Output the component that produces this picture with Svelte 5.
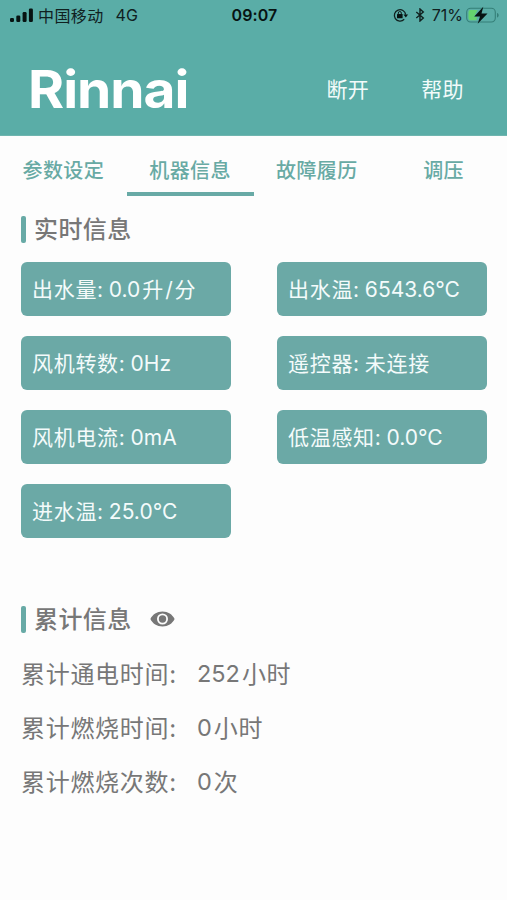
<script>
  // Tabs across the top of the page
  const tabs = [
    { id: 'params', label: '参数设定' },
    { id: 'machine', label: '机器信息' },
    { id: 'faults', label: '故障履历' },
    { id: 'pressure', label: '调压' }
  ];

  // Realtime readings, laid out two per row
  const readings = [
    { label: '出水量', value: '0.0', unit: '升/分' },
    { label: '出水温', value: '6543.6°C' },
    { label: '风机转数', value: '0Hz' },
    { label: '遥控器', value: '', unit: '未连接' },
    { label: '风机电流', value: '0mA' },
    { label: '低温感知', value: '0.0°C' },
    { label: '进水温', value: '25.0°C' }
  ];

  const totals = [
    { label: '累计通电时间', value: '252', unit: '小时' },
    { label: '累计燃烧时间', value: '0', unit: '小时' },
    { label: '累计燃烧次数', value: '0', unit: '次' }
  ];

  let activeTab = $state('machine');
  let showTotals = $state(true);
</script>

<div class="app">
  <header>
    <div class="status-bar">
      <div class="carrier">
        <svg class="signal" width="24" height="15" viewBox="0 0 24 15">
          <rect x="0" y="10" width="4" height="4" rx="1.3" />
          <rect x="6.3" y="7.5" width="4" height="6.5" rx="1.3" />
          <rect x="12.6" y="4" width="4" height="10" rx="1.3" />
          <rect x="18.9" y="0.5" width="4" height="13.5" rx="1.3" />
        </svg>
        <span class="operator">中国移动</span>
        <span class="network">4G</span>
      </div>
      <div class="clock">09:07</div>
      <div class="indicators">
        <svg class="rotation" width="16" height="14" viewBox="0 0 16 14">
          <path d="M11.2 11.3A5.7 5.7 0 1 1 12.7 6.6" fill="none" stroke="#10201f" stroke-width="1.3" />
          <path d="M10.5 6.5h4.6l-2.3 3.1z" />
          <rect x="4" y="6" width="5.6" height="4.3" rx="0.5" />
          <path d="M5.3 6.5V5a1.5 1.5 0 0 1 3 0v1.5" fill="none" stroke="#10201f" stroke-width="1" />
        </svg>
        <svg class="bluetooth" width="10" height="14" viewBox="0 0 10 14">
          <path d="M1.3 4l7 6L5 13V1l3.3 3-7 6" fill="none" stroke="#10201f" stroke-width="1.4" />
        </svg>
        <span class="percent">71%</span>
        <svg class="battery" width="34" height="18" viewBox="0 0 34 18">
          <rect x="0.7" y="2.2" width="28.6" height="13.8" rx="4" fill="none" stroke="#357f78" stroke-width="1.1" />
          <path class="charge" d="M4.5 4H11.500L8 10.800h3.200l-1 3.400H4.500a2 2 0 0 1-2-2V6a2 2 0 0 1 2-2z" />
          <path d="M31 7v4.5c1-.3 1.7-1.1 1.7-2.25S32 7.3 31 7z" fill="#357f78" />
          <path d="M17.300 0.800L8.300 10.400h5.700l-2.300 7.300L21.500 7.600h-6z" />
        </svg>
      </div>
    </div>

    <div class="nav-bar">
      <div class="logo">Rinnai</div>
      <nav>
        <button>断开</button>
        <button>帮助</button>
      </nav>
    </div>
  </header>

  <div class="tabs">
    {#each tabs as tab}
      <button class:active={tab.id === activeTab} onclick={() => (activeTab = tab.id)}>{tab.label}</button>
    {/each}
  </div>

  <main>
    <h2><span>实时信息</span></h2>
    <div class="readings">
      {#each readings as item}
        <div class="reading">
          <span class="cjk">{item.label}:</span>
          {#if item.value}<span class="value">{item.value}</span>{/if}
          {#if item.unit}<span class="cjk unit" class:spaced={item.unit.includes('/')}>{item.unit}</span>{/if}
        </div>
      {/each}
    </div>

    <div class="totals-title">
      <h2><span>累计信息</span></h2>
      <button class="toggle" aria-label="显示" onclick={() => (showTotals = !showTotals)}>
        <svg width="25" height="16" viewBox="0 0 25 16">
          <path
            fill-rule="evenodd"
            d="M12.5 0.5C7 .5 2.6 3.4.4 8c2.2 4.6 6.6 7.5 12.1 7.5S22.4 12.6 24.6 8C22.4 3.4 18 .5 12.5.5zm0 2a5.5 5.5 0 1 1 0 11 5.5 5.5 0 0 1 0-11z"
          />
          <circle cx="12.5" cy="8" r="3.7" />
        </svg>
      </button>
    </div>

    {#if showTotals}
      <div class="totals">
        {#each totals as item}
          <div class="total">
            <span class="cjk name">{item.label}:</span>
            <span class="value">{item.value}</span>
            <span class="cjk">{item.unit}</span>
          </div>
        {/each}
      </div>
    {/if}
  </main>
</div>

<style>
  :global(body) {
    background: #fdfdfd;
  }

  .app {
    width: 507px;
    height: 900px;
    overflow: hidden;
    box-sizing: border-box;
    background: #fdfdfd;
    font-family: Inter, 'Noto Sans CJK SC', sans-serif;
    color: #777;
  }

  button {
    padding: 0;
    border: none;
    background: none;
    font-family: inherit;
    cursor: pointer;
  }

  header {
    height: 136px;
    box-sizing: border-box;
    background: #5aada7;
    border-bottom: 1px solid #6fb5af;
  }

  .status-bar {
    display: grid;
    grid-template-columns: 1fr auto 1fr;
    align-items: center;
    height: 30px;
    padding: 0 7px 0 10px;
    color: #10201f;
    font-size: 16px;
  }

  .status-bar svg {
    fill: #071312;
  }

  .carrier,
  .indicators {
    display: flex;
    align-items: center;
  }

  .indicators {
    justify-content: flex-end;
  }

  .operator {
    margin-left: 4px;
    padding-bottom: 1px;
    font-size: 16px;
    letter-spacing: 0.4px;
  }

  .network {
    margin-left: 12px;
  }

  .clock {
    margin-right: 1px;
    color: #071312;
    font-weight: 600;
    letter-spacing: 0.1px;
  }

  .bluetooth {
    margin-left: 6px;
  }

  .percent {
    margin: 0 3px 0 7px;
  }

  .status-bar .charge {
    fill: #65d36e;
  }

  .nav-bar {
    display: flex;
    align-items: center;
    justify-content: space-between;
    height: 105px;
    padding: 0 43px 0 28px;
    box-sizing: border-box;
  }

  .logo {
    margin-top: 15px;
    color: #fff;
    font-size: 52px;
    font-weight: 700;
    line-height: 60px;
    letter-spacing: -1px;
    transform: scaleX(1.06);
    transform-origin: left center;
  }

  nav {
    display: flex;
    gap: 52px;
    margin-top: 14px;
  }

  nav button {
    color: #f2fbfa;
    font-size: 21px;
    line-height: 30px;
    letter-spacing: 0.4px;
  }

  .tabs {
    display: grid;
    grid-template-columns: repeat(4, 1fr);
    height: 60px;
  }

  .tabs button {
    padding-top: 10px;
    border-bottom: 4px solid transparent;
    color: #68aaa4;
    font-size: 20px;
    font-weight: 500;
    letter-spacing: 0.4px;
  }

  .tabs button.active {
    border-bottom-color: #68aaa6;
  }

  main {
    padding: 16px 20px 0 21px;
  }

  h2 {
    display: flex;
    align-items: center;
    gap: 8px;
    height: 34px;
    margin: 0;
    font-size: 24px;
    font-weight: 500;
    letter-spacing: 0.4px;
  }

  h2 span {
    padding-bottom: 3px;
  }

  h2::before {
    content: '';
    width: 5px;
    height: 27px;
    border-radius: 2px;
    background: #68aaa6;
  }

  /* the CJK face sits lower in its line box than the Latin one */
  .cjk {
    padding-bottom: 2px;
  }

  .readings {
    display: grid;
    grid-template-columns: 210px 210px;
    justify-content: space-between;
    row-gap: 20px;
    margin-top: 16.4px;
  }

  .reading {
    display: flex;
    align-items: center;
    height: 54px;
    padding-left: 11px;
    box-sizing: border-box;
    border-radius: 6px;
    background: #6ba9a6;
    color: #f4fbfb;
    font-size: 21px;
    letter-spacing: 0.7px;
    white-space: nowrap;
  }

  .reading .value {
    margin-left: 5px;
    letter-spacing: 0;
  }

  .reading .unit {
    margin-left: 5px;
  }

  .reading .unit.spaced {
    margin-left: 2px;
    letter-spacing: 1.8px;
  }

  .totals-title {
    display: flex;
    align-items: center;
    gap: 18px;
    margin-top: 64px;
  }

  .toggle {
    display: flex;
  }

  .toggle svg {
    fill: #777;
  }

  .totals {
    margin-top: 10px;
  }

  .total {
    display: flex;
    align-items: center;
    height: 54px;
    font-size: 24px;
    letter-spacing: 0.6px;
  }

  .total .name {
    width: 176px;
    letter-spacing: 0.7px;
  }

  .total .value {
    margin-right: 2px;
    font-size: 23.5px;
    letter-spacing: 0;
  }
</style>
